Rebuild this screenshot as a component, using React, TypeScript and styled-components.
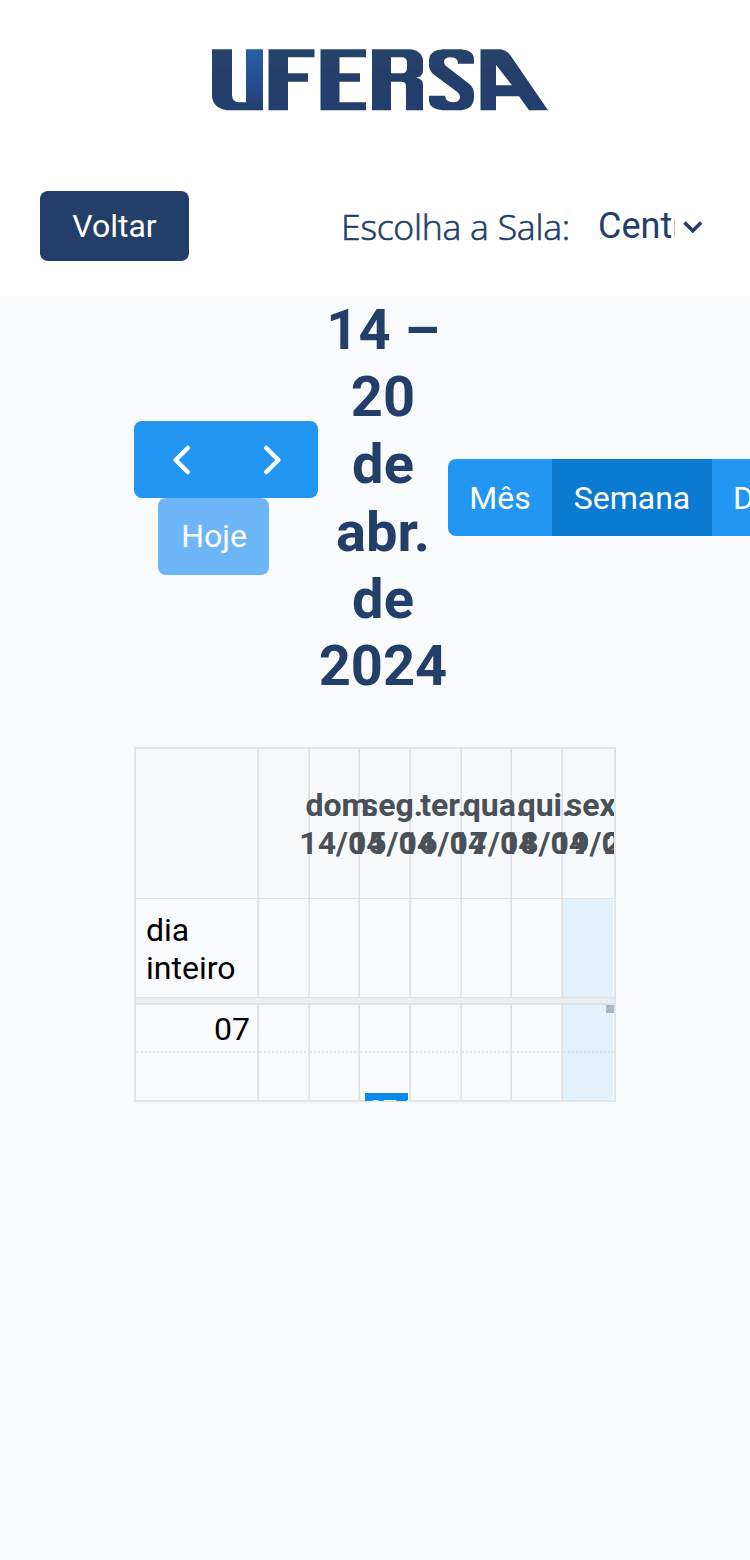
import React from 'react';
import styled, { createGlobalStyle, css } from 'styled-components';

const Global = createGlobalStyle`
  * { box-sizing: border-box; }
  html, body { margin: 0; padding: 0; background: #f9fafc; }
  body { font-family: Roboto, sans-serif; width: 750px; height: 1560px; overflow: hidden; }
  button { font-family: inherit; border: 0; margin: 0; padding: 0; }
`;

const Page = styled.div`
  width: 750px;
  height: 1560px;
  overflow: hidden;
  background: #f9fafc;
`;

const Header = styled.header`
  height: 296px;
  background: #fff;
  display: flex;
  flex-direction: column;
`;

const LogoRow = styled.div`
  height: 191px;
  padding: 48px 0 0 211px;
`;

const Actions = styled.div`
  display: flex;
  align-items: flex-start;
  padding-left: 40px;
`;

const BackButton = styled.button`
  width: 149px;
  height: 70px;
  border-radius: 8px;
  background: #233e69;
  color: #fff;
  font-size: 32px;
`;

const RoomLabel = styled.label`
  margin-left: 152px;
  width: 257px;
  line-height: 71px;
  font-family: 'Open Sans', sans-serif;
  font-weight: 300;
  font-size: 35.6px;
  letter-spacing: -0.25px;
  -webkit-text-stroke: 0.6px #233e69;
  color: #233e69;
  white-space: nowrap;
`;

const RoomSelect = styled.div`
  display: flex;
  align-items: center;
  height: 70px;
  color: #233e69;
`;

const RoomValue = styled.span`
  width: 77px;
  overflow: hidden;
  white-space: nowrap;
  font-size: 36px;
  line-height: 70px;
`;

const Toolbar = styled.div`
  display: flex;
  align-items: center;
  height: 403px;
  padding-left: 134px;
  width: 900px;
`;

const NavGroup = styled.div`
  width: 184px;
`;

const ButtonGroup = styled.div`
  display: flex;
`;

const CalButton = styled.button<{ $w: number; $active?: boolean; $muted?: boolean; $round?: string }>`
  display: flex;
  align-items: center;
  justify-content: center;
  flex: none;
  width: ${p => p.$w}px;
  height: 77px;
  font-size: 32px;
  color: #fff;
  background: ${p => (p.$active ? '#0b7ad1' : p.$muted ? '#6cb6f7' : '#2196f3')};
  border-radius: ${p => p.$round ?? '0'};
  ${p => p.$muted && 'padding-left: 1px;'}
`;

const TodayWrap = styled.div`
  padding-left: 24px;
`;

const Title = styled.h2`
  margin: 0;
  padding-top: 2px;
  width: 130px;
  text-align: center;
  color: #233e69;
  font-size: 56px;
  line-height: 67.2px;
  font-weight: 700;
`;

const Calendar = styled.div`
  margin: 48px 0 0 134px;
  width: 482px;
  height: 355px;
  border: 2px solid #e1e4e9;
  border-bottom-width: 1px;
  overflow: hidden;
`;

const rowGrid = css`
  display: grid;
  grid-template-rows: 100%;
  grid-template-columns: 123px 51px 50px 51px 51px 50px 51px 51px 51px;
`;

const Row = styled.div<{ $h: number; $head?: boolean }>`
  ${rowGrid}
  width: 529px;
  height: ${p => p.$h}px;
  background: ${p => (p.$head ? '#f8f9fb' : 'transparent')};
`;

const Cell = styled.div<{ $today?: boolean; $dotted?: boolean; $line?: boolean }>`
  border-right: 1px solid #dee2e6;
  box-shadow: inset -1px 0 #e8eaed;
  ${p => p.$today && 'background: #e3f1fd; border-right-color: #f9fafc; box-shadow: none;'}
  ${p => p.$dotted && `border-bottom: 2px dotted ${p.$today ? '#d6dee6' : '#e1e4e8'};`}
  ${p => p.$line && 'border-bottom: 1px solid #dee2e6;'}
`;

const HeadCell = styled(Cell)<{ $edge?: boolean }>`
  display: flex;
  align-items: center;
  justify-content: center;
  padding: 2px 0 0 15px;
  ${p => p.$edge && 'border-right-color: transparent; box-shadow: none;'}
`;

const DayName = styled.span`
  flex: none;
  text-align: center;
  font-weight: 700;
  font-size: 32px;
  line-height: 37.5px;
  color: #495057;
`;

const AxisAllDay = styled(Cell)`
  padding: 12px 10px 0 10px;
  font-size: 32px;
  line-height: 38px;
  color: #000;
`;

const AxisHour = styled(Cell)`
  padding-right: 8px;
  text-align: right;
  font-size: 32px;
  line-height: 48px;
  color: #000;
`;

const Divider = styled.div`
  height: 8px;
  border-top: 1px solid #dee2e6;
  border-bottom: 2px solid #dee2e6;
  background: #ebedef;
`;

const TimeArea = styled.div`
  position: relative;
  height: 96px;
  overflow: hidden;
`;

const Event = styled.div`
  position: absolute;
  left: 229px;
  top: 88px;
  width: 43px;
  height: 60px;
  padding: 1px 2px 0 3px;
  background: #0d89ec;
  color: #fff;
  font-size: 26px;
  line-height: 32px;
  overflow: hidden;
  white-space: nowrap;
`;

const ScrollCorner = styled.div`
  position: absolute;
  right: 0;
  top: 0;
  width: 8px;
  height: 8px;
  background: #b1b7bd;
`;

const days = [
  ['dom.', '14/04'],
  ['seg.', '15/04'],
  ['ter.', '16/04'],
  ['qua.', '17/04'],
  ['qui.', '18/04'],
  ['sex.', '19/04'],
  ['sáb.', '20/04'],
];
const columns = [0, 1, 2, 3, 4, 5, 6, 7];
const TODAY = 6;

const Logo = () => (
  <svg width="338" height="63" viewBox="0 0.200 338 63" role="img" aria-label="UFERSA" display="block">
    <defs>
      <linearGradient id="base" x1="0" y1="0" x2="0" y2="1">
        <stop offset="0" stopColor="#26446a" />
        <stop offset=".4" stopColor="#253e69" />
        <stop offset="1" stopColor="#233f70" />
      </linearGradient>
      <linearGradient id="bar" x1="0" y1="0" x2="0" y2="1">
        <stop offset="0" stopColor="#2760a6" />
        <stop offset=".6" stopColor="#264b8b" />
        <stop offset="1" stopColor="#233f70" />
      </linearGradient>
    </defs>
    <g fill="url(#base)">
      <path d="M1 1.500H21V47Q21 54.500 28 54.500H35V62.500H16Q1 60 1 47Z" />
      <path d="M57.500 1.500H103.500V9.500H77V25.500H97V34H77V62.500H57.500Z" />
      <path d="M109.500 1.500H155V9.500H128.500V25.500H149V34H128.500V54.500H155V62.500H109.500Z" />
      <path fillRule="evenodd" d="M161 1.500H199Q212 3 212 14V23Q212 29 205 30Q212 31 212 37V62.500H195V38Q195 34 190 34H180V62.500H161ZM180 9.500V25.500H191Q196 25.500 196 20V15Q196 9.500 191 9.500Z" />
      <path d="M232 1.500H250Q263 2.500 263 12V16H247Q247 9.500 240 9.500Q233 9.500 233 14Q233 17 236 19L258 36Q263 40 263 46V49Q263 61 250 62.500H232Q218 61.500 218 52V48H234Q235 54.500 242 54.500Q249 54.500 249 49Q249 46 246 44L223 27Q218 23 218 17V13Q218 2.500 232 1.500Z" />
      <path fillRule="evenodd" d="M269.500 1.500H289Q295 2 299 7L337 62.500H318L308 48.500H285V62.500H269.500ZM285 17V37.500H301Z" />
    </g>
    <path d="M35 1.500H52V62.500H35Z" fill="url(#bar)" />
  </svg>
);

const Chevron = ({ d }: { d: string }) => (
  <svg width="32" height="32" viewBox="0 0 32 32" fill="none" stroke="#fff" strokeWidth="4.500" strokeLinecap="round" strokeLinejoin="round">
    <path d={d} />
  </svg>
);

export default function App() {
  return (
    <Page>
      <Global />
      <Header>
        <LogoRow>
          <Logo />
        </LogoRow>
        <Actions>
          <BackButton>Voltar</BackButton>
          <RoomLabel>Escolha a Sala:</RoomLabel>
          <RoomSelect>
            <RoomValue>Central</RoomValue>
            <svg width="34" height="32" viewBox="0 0 34 32" fill="none" stroke="#233e69" strokeWidth="3.600">
              <path d="M9.500 12.500L17.800 20.800L26.100 12.500" />
            </svg>
          </RoomSelect>
        </Actions>
      </Header>
      <Toolbar>
        <NavGroup>
          <ButtonGroup>
            <CalButton $w={92} $round="8px 0 0 8px" aria-label="Anterior">
              <Chevron d="M23.700 5L11.700 17L23.700 29" />
            </CalButton>
            <CalButton $w={92} $round="0 8px 8px 0" aria-label="Próximo">
              <Chevron d="M10.300 5L22.300 17L10.300 29" />
            </CalButton>
          </ButtonGroup>
          <TodayWrap>
            <CalButton $w={111} $muted $round="8px">Hoje</CalButton>
          </TodayWrap>
        </NavGroup>
        <Title>14 – 20 de abr. de 2024</Title>
        <ButtonGroup>
          <CalButton $w={104} $round="8px 0 0 8px">Mês</CalButton>
          <CalButton $w={160} $active>Semana</CalButton>
          <CalButton $w={88} $round="0 8px 8px 0">Dia</CalButton>
        </ButtonGroup>
      </Toolbar>
      <Calendar>
        <Row $h={150} $head>
          <HeadCell $line />
          <HeadCell $line />
          {days.map(([name, date]) => (
            <HeadCell key={date} $line $edge={date === '19/04'}>
              <DayName>
                {name}
                <br />
                {date}
              </DayName>
            </HeadCell>
          ))}
        </Row>
        <Row $h={98}>
          <AxisAllDay>dia inteiro</AxisAllDay>
          {columns.map(c => (
            <Cell key={c} $today={c === TODAY} />
          ))}
        </Row>
        <Divider />
        <TimeArea>
          <Row $h={48}>
            <AxisHour $dotted>07</AxisHour>
            {columns.map(c => (
              <Cell key={c} $dotted $today={c === TODAY} />
            ))}
          </Row>
          <Row $h={48}>
            <Cell $line />
            {columns.map(c => (
              <Cell key={c} $line $today={c === TODAY} />
            ))}
          </Row>
          <Event>07:50</Event>
          <ScrollCorner />
        </TimeArea>
      </Calendar>
    </Page>
  );
}
